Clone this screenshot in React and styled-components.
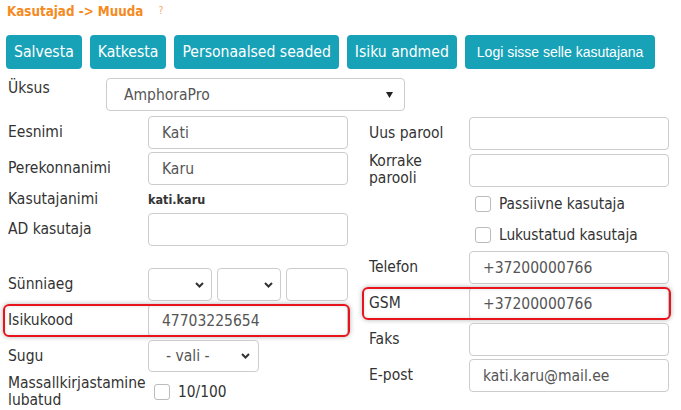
import React from 'react';
import styled, { createGlobalStyle } from 'styled-components';

const Global = createGlobalStyle`
  html, body { margin: 0; padding: 0; background: #fff; }
  body {
    font-family: "DejaVu Sans Condensed", "DejaVu Sans", sans-serif;
    font-stretch: condensed;
    color: #333;
    overflow: hidden;
  }
  * { box-sizing: border-box; }
`;

const Page = styled.div`
  width: 681px;
  height: 410px;
  padding-left: 6px;
  overflow: hidden;
`;

const TitleBar = styled.div`
  height: 35px;
  display: flex;
  align-items: flex-start;
  gap: 15px;
  padding: 4px 0 0 1px;
`;

const Title = styled.span`
  font-weight: bold;
  font-size: 13.3px;
  color: #f58a1f;
`;

const Help = styled.span`
  font-size: 10px;
  color: #f5a66a;
  padding-top: 1px;
`;

const Toolbar = styled.div`
  display: flex;
  gap: 8px;
  height: 34px;
  margin-bottom: 9px;
`;

const Button = styled.button`
  height: 34px;
  padding: 0 ${p => (p.$arial ? 12 : 8)}px;
  border: none;
  border-radius: 4px;
  background: #17a2b8;
  color: #fff;
  font-family: ${p => (p.$arial ? '"Liberation Sans", Arial, sans-serif' : 'inherit')};
  font-stretch: ${p => (p.$arial ? 'normal' : 'condensed')};
  font-size: ${p => (p.$arial ? 14 : 15.6)}px;
  cursor: pointer;
`;

const UnitRow = styled.div`
  display: flex;
  height: 33px;
  padding-left: 2px;
  margin-bottom: 5px;
`;

const UnitLabel = styled.div`
  width: 98px;
  font-size: 15.5px;
  padding-top: 1px;
`;

const SelectBox = styled.div`
  width: ${p => p.$w}px;
  height: ${p => p.$h || 33}px;
  border: 1px solid #ccc;
  border-radius: 4px;
  background: #fff;
  display: flex;
  align-items: center;
  justify-content: space-between;
  padding: 0 ${p => p.$pr || 8}px 0 ${p => p.$pl || 16}px;
  font-size: 15.5px;
  color: #555;
`;

const Form = styled.div`
  display: flex;
  gap: 21px;
  padding-left: 2px;
`;

const Column = styled.div`
  display: flex;
  flex-direction: column;
  gap: 3px;
  margin-top: ${p => p.$top || 0}px;
`;

const Row = styled.div`
  position: relative;
  display: grid;
  grid-template-columns: ${p => p.$label}px 200px;
  height: ${p => (p.$h ? `${p.$h}px` : 'auto')};
  align-items: ${p => p.$align || 'center'};

  ${p =>
    p.$mark &&
    `
    &::after {
      content: '';
      position: absolute;
      top: 0;
      bottom: 0;
      left: ${p.$markLeft}px;
      right: -2px;
      border: 2px solid #e8141c;
      border-radius: 6px;
      box-shadow: 0 0 5px rgba(0, 0, 0, 0.3), inset 0 0 4px rgba(0, 0, 0, 0.12);
      pointer-events: none;
    }
  `}
`;

const Label = styled.div`
  font-size: 15.5px;
  line-height: 17px;
  color: #333;
`;

const Input = styled.input`
  width: ${p => p.$w || 200}px;
  height: 33px;
  border: 1px solid #ccc;
  border-radius: 4px;
  padding: 0 13px;
  font-family: inherit;
  font-stretch: condensed;
  font-size: 15.5px;
  color: #555;
  background: #fff;
  outline: none;
`;

const Strong = styled.span`
  font-weight: bold;
  font-size: 12.5px;
  color: #333;
`;

const Inline = styled.div`
  display: flex;
  align-items: center;
  gap: ${p => p.$gap || 5}px;
  padding-left: ${p => p.$pl || 0}px;
  padding-top: ${p => p.$pt || 0}px;
`;

const Check = styled.span`
  display: inline-block;
  width: 16px;
  height: 16px;
  border: 1px solid #bbb;
  border-radius: 3px;
  background: #fff;
  flex: none;
`;

const CheckText = styled.span`
  font-size: 15.3px;
  color: #333;
`;

const Chevron = () => (
  <svg width="9" height="6" viewBox="0 0 9 6">
    <path d="M1 1 L4.5 4.5 L8 1" fill="none" stroke="#333" strokeWidth="2" />
  </svg>
);

const Triangle = () => (
  <svg width="7" height="6" viewBox="0 0 7 6">
    <path d="M0 0 H7 L3.5 6 Z" fill="#222" />
  </svg>
);

export default function App() {
  return (
    <>
      <Global />
      <Page>
        <TitleBar>
          <Title>Kasutajad -&gt; Muuda</Title>
          <Help>?</Help>
        </TitleBar>
        <Toolbar>
          <Button>Salvesta</Button>
          <Button>Katkesta</Button>
          <Button>Personaalsed seaded</Button>
          <Button>Isiku andmed</Button>
          <Button $arial>Logi sisse selle kasutajana</Button>
        </Toolbar>
        <UnitRow>
          <UnitLabel>Üksus</UnitLabel>
          <SelectBox $w={299} $pl={17} $pr={11}>
            <span>AmphoraPro</span>
            <Triangle />
          </SelectBox>
        </UnitRow>
        <Form>
          <Column>
            <Row $label={140} $h={33}>
              <Label>Eesnimi</Label>
              <Input defaultValue="Kati" />
            </Row>
            <Row $label={140} $h={33}>
              <Label>Perekonnanimi</Label>
              <Input defaultValue="Karu" />
            </Row>
            <Row $label={140} $h={22}>
              <Label>Kasutajanimi</Label>
              <Strong>kati.karu</Strong>
            </Row>
            <Row $label={140} $h={33}>
              <Label>AD kasutaja</Label>
              <Input defaultValue="" />
            </Row>
            <Row $label={140} $h={16} />
            <Row $label={140} $h={33}>
              <Label>Sünniaeg</Label>
              <Inline $gap={5}>
                <SelectBox $w={64} $pr={7}>
                  <span />
                  <Chevron />
                </SelectBox>
                <SelectBox $w={64} $pr={7}>
                  <span />
                  <Chevron />
                </SelectBox>
                <Input $w={62} defaultValue="" />
              </Inline>
            </Row>
            <Row $label={140} $h={33} $mark $markLeft={-5}>
              <Label>Isikukood</Label>
              <Input defaultValue="47703225654" />
            </Row>
            <Row $label={140} $h={32}>
              <Label>Sugu</Label>
              <SelectBox $w={111} $h={32} $pr={8} $pl={17}>
                <span>- vali -</span>
                <Chevron />
              </SelectBox>
            </Row>
            <Row $label={140} $align="start">
              <Label>
                Massallkirjastamine
                <br />
                lubatud
              </Label>
              <Inline $gap={8} $pl={6} $pt={8}>
                <Check />
                <CheckText>10/100</CheckText>
              </Inline>
            </Row>
          </Column>
          <Column $top={1}>
            <Row $label={100} $h={33}>
              <Label>Uus parool</Label>
              <Input type="text" defaultValue="" />
            </Row>
            <Row $label={100} $h={33}>
              <Label>
                Korrake
                <br />
                parooli
              </Label>
              <Input type="text" defaultValue="" />
            </Row>
            <Row $label={100} $h={30}>
              <span />
              <Inline $gap={8} $pl={6}>
                <Check />
                <CheckText>Passiivne kasutaja</CheckText>
              </Inline>
            </Row>
            <Row $label={100} $h={26}>
              <span />
              <Inline $gap={8} $pl={6}>
                <Check />
                <CheckText>Lukustatud kasutaja</CheckText>
              </Inline>
            </Row>
            <Row $label={100} $h={33}>
              <Label>Telefon</Label>
              <Input defaultValue="+37200000766" />
            </Row>
            <Row $label={100} $h={33} $mark $markLeft={-7}>
              <Label>GSM</Label>
              <Input defaultValue="+37200000766" />
            </Row>
            <Row $label={100} $h={33}>
              <Label>Faks</Label>
              <Input defaultValue="" />
            </Row>
            <Row $label={100} $h={33}>
              <Label>E-post</Label>
              <Input defaultValue="kati.karu@mail.ee" />
            </Row>
          </Column>
        </Form>
      </Page>
    </>
  );
}
